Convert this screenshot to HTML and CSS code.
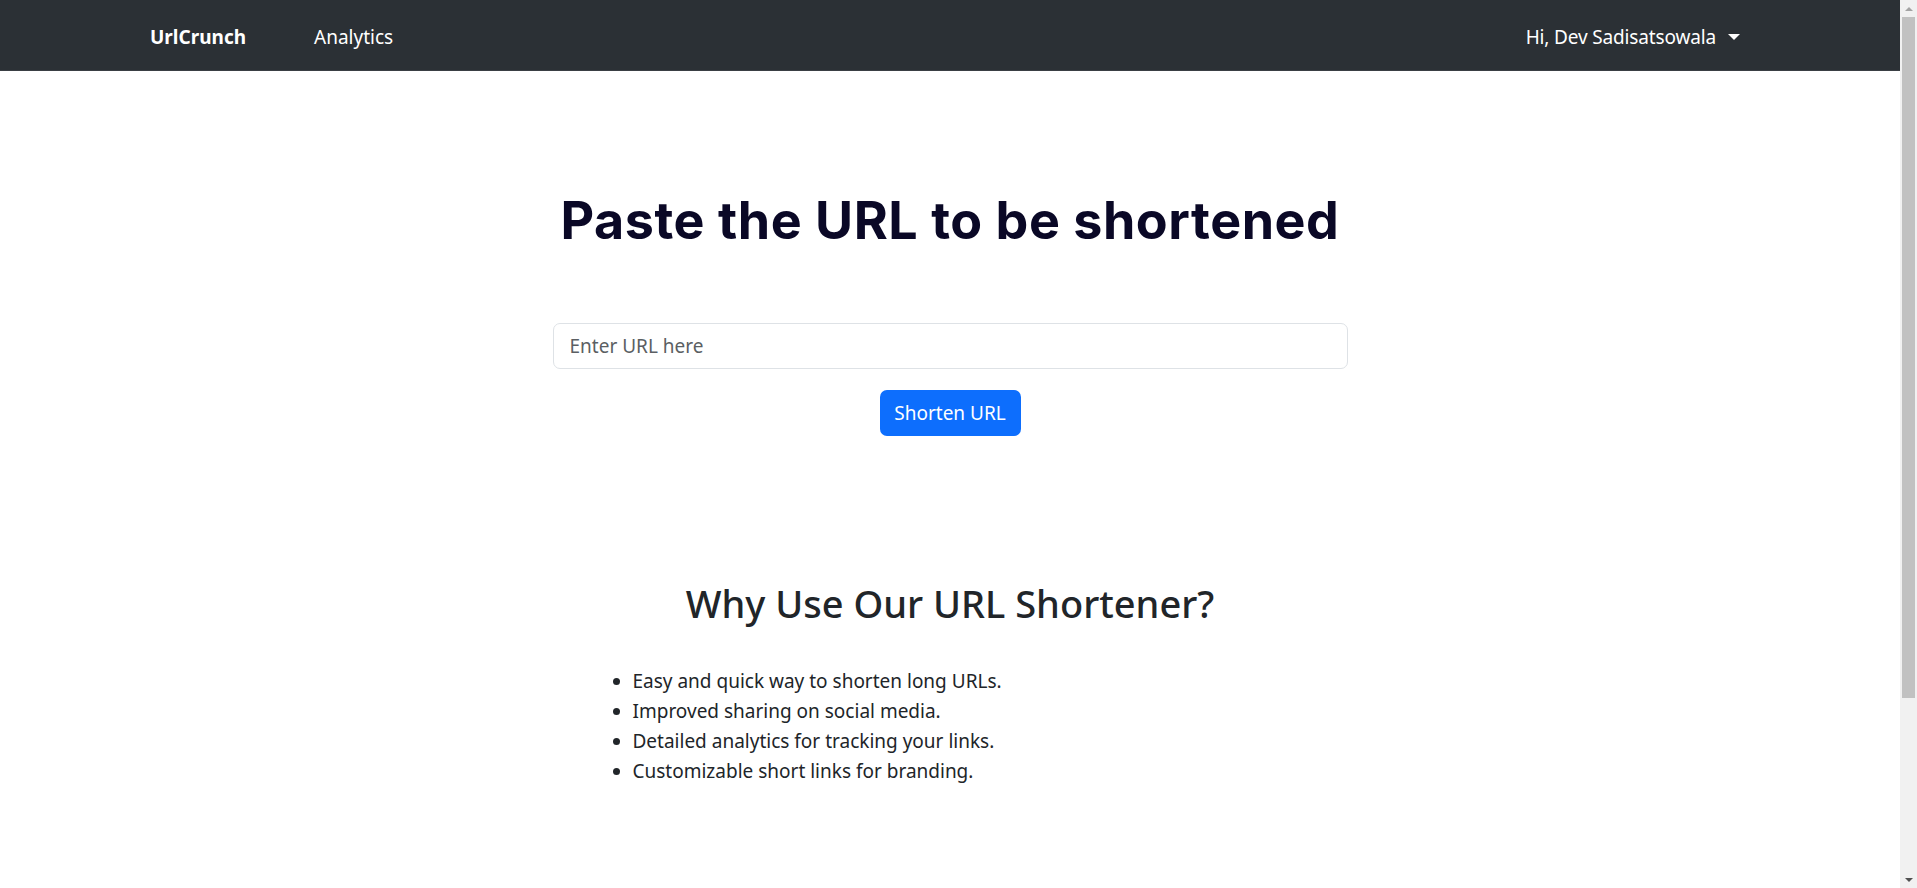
FILE: index.html
```html
<!DOCTYPE html>
<html lang="en">
<head>
<meta charset="utf-8">
<title>UrlCrunch</title>
<link rel="stylesheet" href="styles.css">
</head>
<body>
<div class="app">
  <div class="page">
    <nav class="navbar">
      <div class="nav-inner">
        <a class="brand" href="#">UrlCrunch</a>
        <a class="nav-link" href="#">Analytics</a>
        <div class="spacer"></div>
        <a class="user" href="#">Hi, Dev Sadisatsowala <span class="caret"></span></a>
      </div>
    </nav>
    <main class="main">
      <section class="hero">
        <h1 class="hero-title">Paste the URL to be shortened</h1>
        <form class="shorten-form">
          <input class="url-input" type="text" placeholder="Enter URL here">
          <button class="btn-primary" type="button">Shorten URL</button>
        </form>
      </section>
      <section class="why">
        <h2 class="why-title">Why Use Our URL Shortener?</h2>
        <ul class="why-list">
          <li>Easy and quick way to shorten long URLs.</li>
          <li>Improved sharing on social media.</li>
          <li>Detailed analytics for tracking your links.</li>
          <li>Customizable short links for branding.</li>
        </ul>
      </section>
    </main>
  </div>
  <div class="scrollbar">
    <div class="sb-arrow sb-up"></div>
    <div class="sb-track"><div class="sb-thumb"></div></div>
    <div class="sb-arrow sb-down"></div>
  </div>
</div>
</body>
</html>
```

FILE: styles.css
```css
* { box-sizing: border-box; }
html, body { margin: 0; padding: 0; height: 100%; overflow: hidden; }
body {
  font-family: "Noto Sans", "Open Sans", sans-serif;
  font-size: 19px;
  color: #212529;
  background: #fff;
}
.app { display: flex; width: 1917px; height: 888px; }
.page { flex: 1; display: flex; flex-direction: column; min-width: 0; }

.navbar {
  height: 71px;
  background: #2b3035;
  border-bottom: 1px solid #3a3f44;
  display: flex;
  align-items: center;
  padding-top: 4px;
}
.nav-inner {
  flex: 1;
  display: flex;
  align-items: center;
  padding: 0 160px 0 150px;
}
.brand {
  color: #fff;
  text-decoration: none;
  font-weight: 700;
  font-size: 19px;
  margin-right: 68px;
}
.nav-link { color: #fff; text-decoration: none; }
.spacer { flex: 1; }
.user { color: #fff; text-decoration: none; display: flex; align-items: center; letter-spacing: -0.15px; }
.caret {
  display: inline-block;
  margin-left: 12px;
  border-top: 6px solid #fff;
  border-left: 6px solid transparent;
  border-right: 6px solid transparent;
}

.main { display: flex; flex-direction: column; align-items: center; }
.hero { display: flex; flex-direction: column; align-items: center; padding-top: 119px; }
.hero-title {
  margin: 0;
  font-family: "Inter", sans-serif;
  font-weight: 700;
  font-size: 52px;
  line-height: 1.2;
  color: #0a0826;
  letter-spacing: 0.55px;
}
.shorten-form {
  display: flex;
  flex-direction: column;
  align-items: center;
  gap: 21px;
  margin-top: 71px;
}
.url-input {
  width: 795px;
  height: 46px;
  border: 1px solid #dee2e6;
  border-radius: 7px;
  padding: 0 16px;
  font-family: inherit;
  font-size: 19px;
  color: #212529;
  outline: none;
}
.url-input::placeholder { color: #5b5f63; }
.btn-primary {
  width: 141px;
  height: 46px;
  border: 0;
  border-radius: 7px;
  background: #0d6efd;
  color: #fff;
  font-family: inherit;
  font-size: 19px;
  padding: 0;
}

.why { display: flex; flex-direction: column; align-items: center; padding-top: 145px; }
.why-title {
  margin: 0;
  font-weight: 500;
  font-size: 38px;
  line-height: 1.2;
  color: #212529;
}
.why-list {
  width: 795px;
  margin: 39px 0 0;
  padding-left: 80px;
  line-height: 30px;
}

.scrollbar {
  width: 17px;
  height: 888px;
  background: #f1f1f1;
  display: flex;
  flex-direction: column;
}
.sb-arrow { height: 17px; display: flex; align-items: center; justify-content: center; }
.sb-up::before {
  content: "";
  border-bottom: 4px solid #a3a3a3;
  border-left: 4px solid transparent;
  border-right: 4px solid transparent;
}
.sb-down::before {
  content: "";
  border-top: 4px solid #505050;
  border-left: 4px solid transparent;
  border-right: 4px solid transparent;
}
.sb-track { flex: 1; display: flex; flex-direction: column; padding: 0 2px; }
.sb-thumb { height: 681px; background: #c1c1c1; }
```
